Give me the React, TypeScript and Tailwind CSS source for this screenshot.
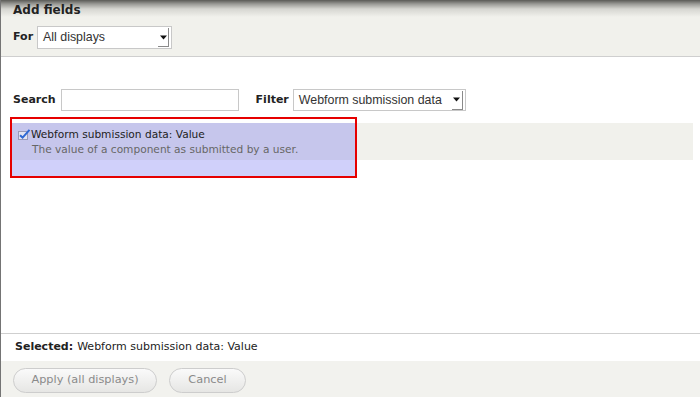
import React from "react";

function SelectArrow() {
  return (
    <span className="flex h-[19px] w-[11px] items-center justify-center border-r border-b border-[#8a8a8a] bg-white">
      <svg width="7" height="5" viewBox="0 0 7 5">
        <path d="M0 0.5h7L3.5 4.5z" fill="#111" />
      </svg>
    </span>
  );
}

function FakeSelect({ label, className }: { label: string; className: string }) {
  return (
    <div
      className={`flex items-center justify-between border border-[#c8c8c8] bg-white pl-[5px] pr-[2px] text-[12.4px] text-[#333] ${className}`}
      style={{ fontFamily: '"Liberation Sans", Arial, sans-serif' }}
    >
      <span>{label}</span>
      <SelectArrow />
    </div>
  );
}

function CheckIcon() {
  return (
    <svg width="13" height="11" viewBox="0 0 13 11" className="shrink-0">
      <rect x="0.5" y="2.5" width="9" height="8" fill="#e4e4f2" stroke="#9a9ab8" />
      <path d="M2 6.2 L4.6 8.6 L11.5 0.8" fill="none" stroke="#2f68d4" strokeWidth="2" />
    </svg>
  );
}

export default function App() {
  return (
    <div
      className="flex h-[397px] w-[700px] flex-col overflow-hidden border-l border-[#747474] bg-white text-[#333]"
      style={{ fontFamily: '"DejaVu Sans", "Noto Sans", sans-serif' }}
    >
      {/* Header */}
      <div className="flex h-[57px] shrink-0 flex-col border-b border-[#cfcfcf] bg-[linear-gradient(to_bottom,#5a5a56_0px,#9a9a96_4px,#d6d6d1_9px,#f1f1ec_17px,#f1f1ec_100%)] pl-[12px]">
        <div className="mt-[3px] text-[12px] font-bold leading-[14px] text-[#222]">Add fields</div>
        <div className="mt-[9px] flex items-center gap-[4px]">
          <span className="text-[11px] font-bold text-[#222]">For</span>
          <FakeSelect label="All displays" className="h-[23px] w-[135px]" />
        </div>
      </div>

      {/* Content */}
      <div className="relative flex flex-1 flex-col bg-white">
        <div className="mt-[32px] flex items-center pl-[12px]">
          <span className="text-[11px] font-bold text-[#222]">Search</span>
          <div className="ml-[5px] h-[22px] w-[178px] border border-[#c8c8c8] bg-white" />
          <span className="ml-[17px] text-[11px] font-bold text-[#222]">Filter</span>
          <FakeSelect label="Webform submission data" className="ml-[4px] h-[22px] w-[173px]" />
        </div>

        <div className="ml-[9px] mt-[12px] flex h-[37px] w-[683px] bg-[#f1f1ec]">
          <div className="flex w-[345px] flex-col bg-[#c6c6ec] pl-[8px] pt-[5px]">
            <div className="flex items-center text-[10.6px] leading-[13px] text-[#222]">
              <CheckIcon />
              <span>Webform submission data: Value</span>
            </div>
            <div className="ml-[14px] mt-[2px] text-[10.6px] leading-[13px] text-[#666]">
              The value of a component as submitted by a user.
            </div>
          </div>
        </div>
        {/* selection highlight */}
        <div className="pointer-events-none absolute left-[9px] top-[60px] h-[61px] w-[347px] border-2 border-[#e60000]">
          <div className="mt-[41px] h-[16px] bg-[#d0d0fa]" />
        </div>
      </div>

      {/* Selected */}
      <div className="flex h-[28px] shrink-0 items-center border-t border-[#cfcfcf] bg-white pl-[14px] text-[11px] text-[#222]">
        <span className="font-bold">Selected:</span>
        <span className="ml-[4px]">Webform submission data: Value</span>
      </div>

      {/* Buttons */}
      <div className="flex h-[36px] shrink-0 items-start gap-[12px] bg-[#f2f2ee] pl-[12px] pt-[7px]">
        <button className="flex h-[25px] w-[144px] items-center justify-center rounded-full border border-[#cdcdcd] bg-[linear-gradient(to_bottom,#fafafa,#e6e6e4)] text-[11.3px] text-[#8a8a8a]">
          Apply (all displays)
        </button>
        <button className="flex h-[25px] w-[77px] items-center justify-center rounded-full border border-[#cdcdcd] bg-[linear-gradient(to_bottom,#fafafa,#e6e6e4)] text-[11.3px] text-[#8a8a8a]">
          Cancel
        </button>
      </div>
    </div>
  );
}
